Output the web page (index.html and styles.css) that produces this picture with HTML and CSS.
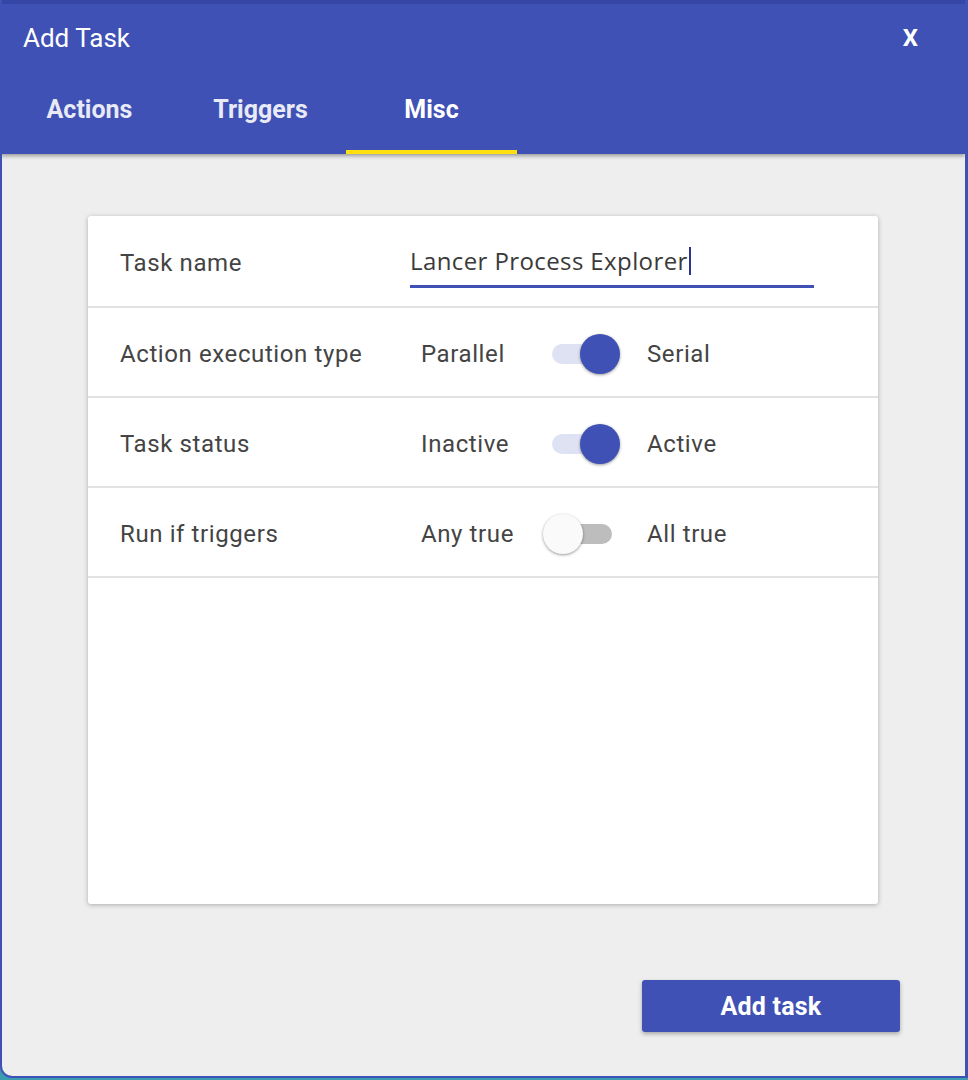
FILE: index.html
```html
<!DOCTYPE html>
<html>
<head>
<meta charset="utf-8">
<title>Add Task</title>
<link rel="stylesheet" href="styles.css">
</head>
<body>
<div class="window">
  <header class="header">
    <div class="title-row">
      <span class="title">Add Task</span>
      <span class="close">X</span>
    </div>
    <nav class="tabs">
      <div class="tab">Actions</div>
      <div class="tab">Triggers</div>
      <div class="tab active">Misc</div>
    </nav>
  </header>
  <main class="content">
    <section class="card">
      <div class="row">
        <div class="label">Task name</div>
        <div class="input"><span class="input-text">Lancer Process Explorer</span><span class="caret"></span></div>
      </div>
      <div class="row">
        <div class="label">Action execution type</div>
        <div class="toggle-group">
          <span class="opt-left">Parallel</span>
          <span class="switch on"><span class="track"></span><span class="thumb"></span></span>
          <span class="opt-right">Serial</span>
        </div>
      </div>
      <div class="row">
        <div class="label">Task status</div>
        <div class="toggle-group">
          <span class="opt-left">Inactive</span>
          <span class="switch on"><span class="track"></span><span class="thumb"></span></span>
          <span class="opt-right">Active</span>
        </div>
      </div>
      <div class="row">
        <div class="label">Run if triggers</div>
        <div class="toggle-group">
          <span class="opt-left">Any true</span>
          <span class="switch off"><span class="track"></span><span class="thumb"></span></span>
          <span class="opt-right">All true</span>
        </div>
      </div>
    </section>
    <div class="actions">
      <button class="btn">Add task</button>
    </div>
  </main>
</div>
</body>
</html>
```
FILE: styles.css
```css
html, body {
  margin: 0;
  padding: 0;
  width: 968px;
  height: 1080px;
  overflow: hidden;
  background: #3a9cb0;
  font-family: Roboto, "Noto Sans", sans-serif;
}
.window {
  box-sizing: border-box;
  width: 968px;
  height: 1078px;
  background: #eeeeee;
  border-left: 2px solid #3f51b5;
  border-right: 3px solid #3f51b5;
  border-bottom: 2px solid #3f51b5;
  border-bottom-left-radius: 12px;
  display: flex;
  flex-direction: column;
  overflow: hidden;
}
.header {
  background: #3f51b5;
  border-top: 4px solid #3546a6;
  margin-left: -2px;
  padding-left: 2px;
  box-shadow: 0 2px 4px rgba(0, 0, 0, 0.35);
  position: relative;
  z-index: 1;
  color: #fff;
}
.title-row {
  height: 68px;
  display: flex;
  align-items: center;
  justify-content: space-between;
  padding: 0 47px 0 21px;
}
.title {
  font-size: 26px;
}
.close {
  font-size: 24px;
  font-weight: 700;
}
.tabs {
  display: flex;
  height: 82px;
  padding-left: 2px;
}
.tab {
  width: 171px;
  display: flex;
  align-items: center;
  justify-content: center;
  font-size: 25px;
  font-weight: 700;
  color: #e8eaf6;
  box-sizing: border-box;
  border-bottom: 4px solid transparent;
  padding-bottom: 3px;
}
.tab.active {
  color: #ffffff;
  border-bottom-color: #ffe00f;
}
.content {
  flex: 1;
  display: flex;
  flex-direction: column;
  padding: 62px 65px 0 86px;
}
.card {
  width: 790px;
  height: 688px;
  background: #ffffff;
  border-radius: 3px;
  box-shadow: 0 1px 5px rgba(0, 0, 0, 0.28);
  box-sizing: border-box;
  padding-top: 4px;
}
.row {
  height: 90px;
  box-sizing: border-box;
  border-bottom: 2px solid #e2e2e2;
  display: flex;
  align-items: center;
  padding-left: 32px;
  padding-top: 4px;
  font-size: 24px;
  letter-spacing: 0.6px;
  color: #444444;
}
.row:first-child {
  height: 88px;
  padding-top: 0;
}
.label {
  width: 290px;
  flex: none;
}
.input {
  width: 404px;
  height: 50px;
  box-sizing: border-box;
  border-bottom: 3px solid #3f51b5;
  display: flex;
  align-items: center;
  color: #3a3a3a;
  padding-bottom: 2px;
}
.input-text {
  font-family: "Open Sans", "Noto Sans", sans-serif;
  font-size: 24px;
  letter-spacing: 0.4px;
}
.caret {
  display: inline-block;
  width: 2px;
  height: 28px;
  background: #2a3590;
  margin-left: 1px;
}
.toggle-group {
  display: flex;
  align-items: center;
  margin-left: 11px;
}
.opt-left {
  width: 122px;
}
.opt-right {
  margin-left: 27px;
}
.switch {
  position: relative;
  width: 77px;
  height: 42px;
  display: block;
  flex: none;
}
.track {
  position: absolute;
  left: 9px;
  top: 11px;
  width: 60px;
  height: 20px;
  border-radius: 10px;
  background: #bdbdbd;
}
.switch.on .track {
  background: #dfe2f2;
}
.thumb {
  position: absolute;
  top: 1px;
  left: 0;
  width: 40px;
  height: 40px;
  border-radius: 50%;
  background: #fafafa;
  box-shadow: 0 1px 3px rgba(0, 0, 0, 0.4);
}
.switch.on .thumb {
  left: 37px;
  background: #3f51b5;
}
.actions {
  display: flex;
  justify-content: flex-end;
  margin-top: 76px;
}
.btn {
  width: 258px;
  height: 52px;
  border: none;
  border-radius: 3px;
  background: #3f51b5;
  color: #ffffff;
  font-family: Roboto, "Noto Sans", sans-serif;
  font-size: 25px;
  letter-spacing: 0.2px;
  font-weight: 700;
  box-shadow: 0 2px 4px rgba(0, 0, 0, 0.3);
  padding: 0;
}
```
